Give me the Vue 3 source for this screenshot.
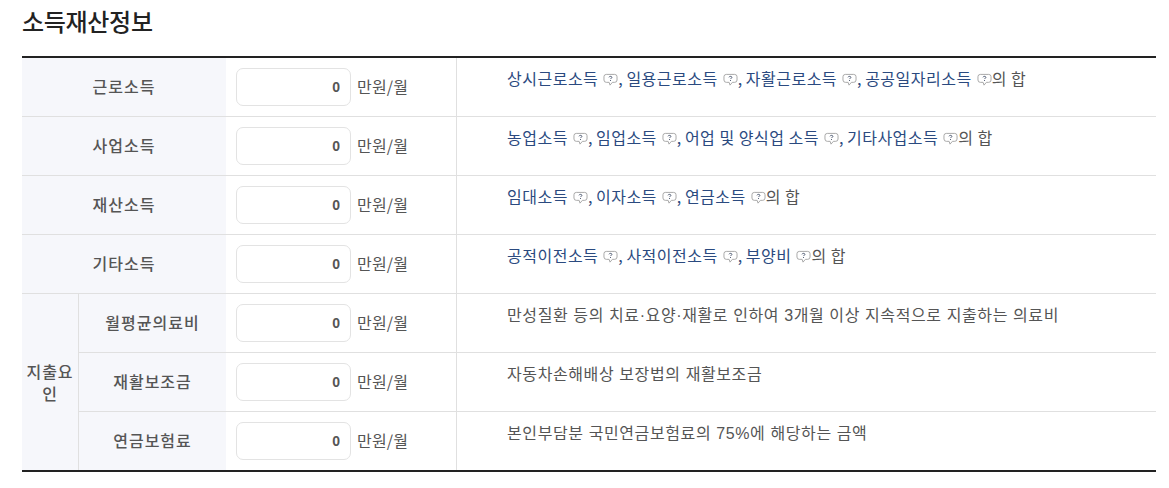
<script setup>
const rows = [
  { label: '근로소득', parts: ['상시근로소득', '일용근로소득', '자활근로소득', '공공일자리소득'] },
  { label: '사업소득', parts: ['농업소득', '임업소득', '어업 및 양식업 소득', '기타사업소득'] },
  { label: '재산소득', parts: ['임대소득', '이자소득', '연금소득'] },
  { label: '기타소득', parts: ['공적이전소득', '사적이전소득', '부양비'] },
  { label: '월평균의료비', group: '지출요인', span: 3, desc: '만성질환 등의 치료·요양·재활로 인하여 3개월 이상 지속적으로 지출하는 의료비' },
  { label: '재활보조금', group: '지출요인', desc: '자동차손해배상 보장법의 재활보조금' },
  { label: '연금보험료', group: '지출요인', desc: '본인부담분 국민연금보험료의 75%에 해당하는 금액' }
]
</script>

<template>
  <div class="page">
    <h2 class="title">소득재산정보</h2>
    <table class="info-table">
      <colgroup>
        <col class="col-group" />
        <col class="col-label" />
        <col class="col-input" />
        <col />
      </colgroup>
      <tbody>
        <tr v-for="row in rows" :key="row.label">
          <th v-if="row.span" :rowspan="row.span" class="group-cell">{{ row.group }}</th>
          <th :colspan="row.group ? 1 : 2"><span class="label-text">{{ row.label }}</span></th>
          <td class="input-cell">
            <input class="amount" type="text" value="0" />
            <span class="unit">만원/월</span>
          </td>
          <td class="desc-cell">
            <template v-if="row.parts">
              <template v-for="(part, i) in row.parts" :key="part">
                <span class="link">{{ part }}</span>
                <svg class="help" viewBox="0 0 16 15" aria-hidden="true">
                  <path d="M3.500 1.500h9A2.500 2.500 0 0 1 15 4v3.500a2.500 2.500 0 0 1-2.500 2.500H10l-2.500 3-1-3h-3A2.500 2.500 0 0 1 1 7.500V4a2.500 2.500 0 0 1 2.500-2.500z" fill="#fff" stroke="#a4a4a4" stroke-width="1" />
                  <path d="M6.400 4.600c.2-.7.900-1 1.600-1 .8 0 1.500.4 1.500 1.100 0 .9-1.400.9-1.500 1.800" fill="none" stroke="#3f4c66" stroke-width="1" />
                  <circle cx="8" cy="8.100" r=".6" fill="#3f4c66" />
                </svg>
                <span v-if="i < row.parts.length - 1" class="link comma">, </span>
              </template>
              <span>의 합</span>
            </template>
            <span v-else class="plain">{{ row.desc }}</span>
          </td>
        </tr>
      </tbody>
    </table>
  </div>
</template>

<style>
body {
  background: #fff;
}
</style>

<style scoped>
.page {
  padding: 0 13px 16px 22px;
  font-family: "Noto Sans CJK KR", "Noto Sans", sans-serif;
  color: #555;
}

.title {
  margin: 0;
  height: 56px;
  padding-top: 5px;
  box-sizing: border-box;
  font-size: 24px;
  line-height: 32px;
  font-weight: 500;
  letter-spacing: -.3px;
  color: #222;
}

.info-table {
  width: 100%;
  table-layout: fixed;
  border-collapse: separate;
  border-spacing: 0;
  border-top: 2px solid #222;
  border-bottom: 2px solid #222;
}

.col-group { width: 57px; }
.col-label { width: 147px; }
.col-input { width: 231px; }

th, td {
  height: 59px;
  padding: 0;
  border-bottom: 1px solid #e0e0e0;
  box-sizing: border-box;
}

tr:last-child th,
tr:last-child td {
  height: 58px;
  border-bottom: 0;
}

th {
  background: #f6f7fb;
  font-size: 16px;
  font-weight: 500;
  letter-spacing: 1px;
  color: #555;
  text-align: center;
}

.label-text {
  display: inline-block;
  margin-bottom: 2px;
}

.group-cell {
  border-right: 1px solid #e0e0e0;
  border-bottom: 0;
  line-height: 22px;
  padding: 0 3px;
  letter-spacing: 1px;
}

.input-cell {
  padding-left: 10px;
  border-right: 1px solid #e0e0e0;
  white-space: nowrap;
}

.amount {
  width: 115px;
  height: 38px;
  box-sizing: border-box;
  padding: 0 10px;
  border: 1px solid #e3e3e3;
  border-radius: 7px;
  background: #fff;
  font-family: "Liberation Sans", sans-serif;
  font-size: 14px;
  font-weight: 700;
  color: #555;
  text-align: right;
  vertical-align: middle;
}

.unit {
  display: inline-block;
  margin: 0 0 2px 6px;
  font-size: 16px;
  letter-spacing: .2px;
  vertical-align: middle;
}

.desc-cell {
  padding: 8px 0 0 50px;
  vertical-align: top;
  font-size: 16px;
  line-height: 24px;
  letter-spacing: .5px;
  white-space: nowrap;
}

.plain {
  font-family: "Liberation Sans", "Noto Sans CJK KR", sans-serif;
  letter-spacing: .6px;
}

.link {
  color: #2b4a7f;
}

.comma {
  letter-spacing: 0;
  white-space: pre;
}

.help {
  width: 15px;
  height: 14px;
  margin-left: 5px;
  vertical-align: -2px;
}
</style>
